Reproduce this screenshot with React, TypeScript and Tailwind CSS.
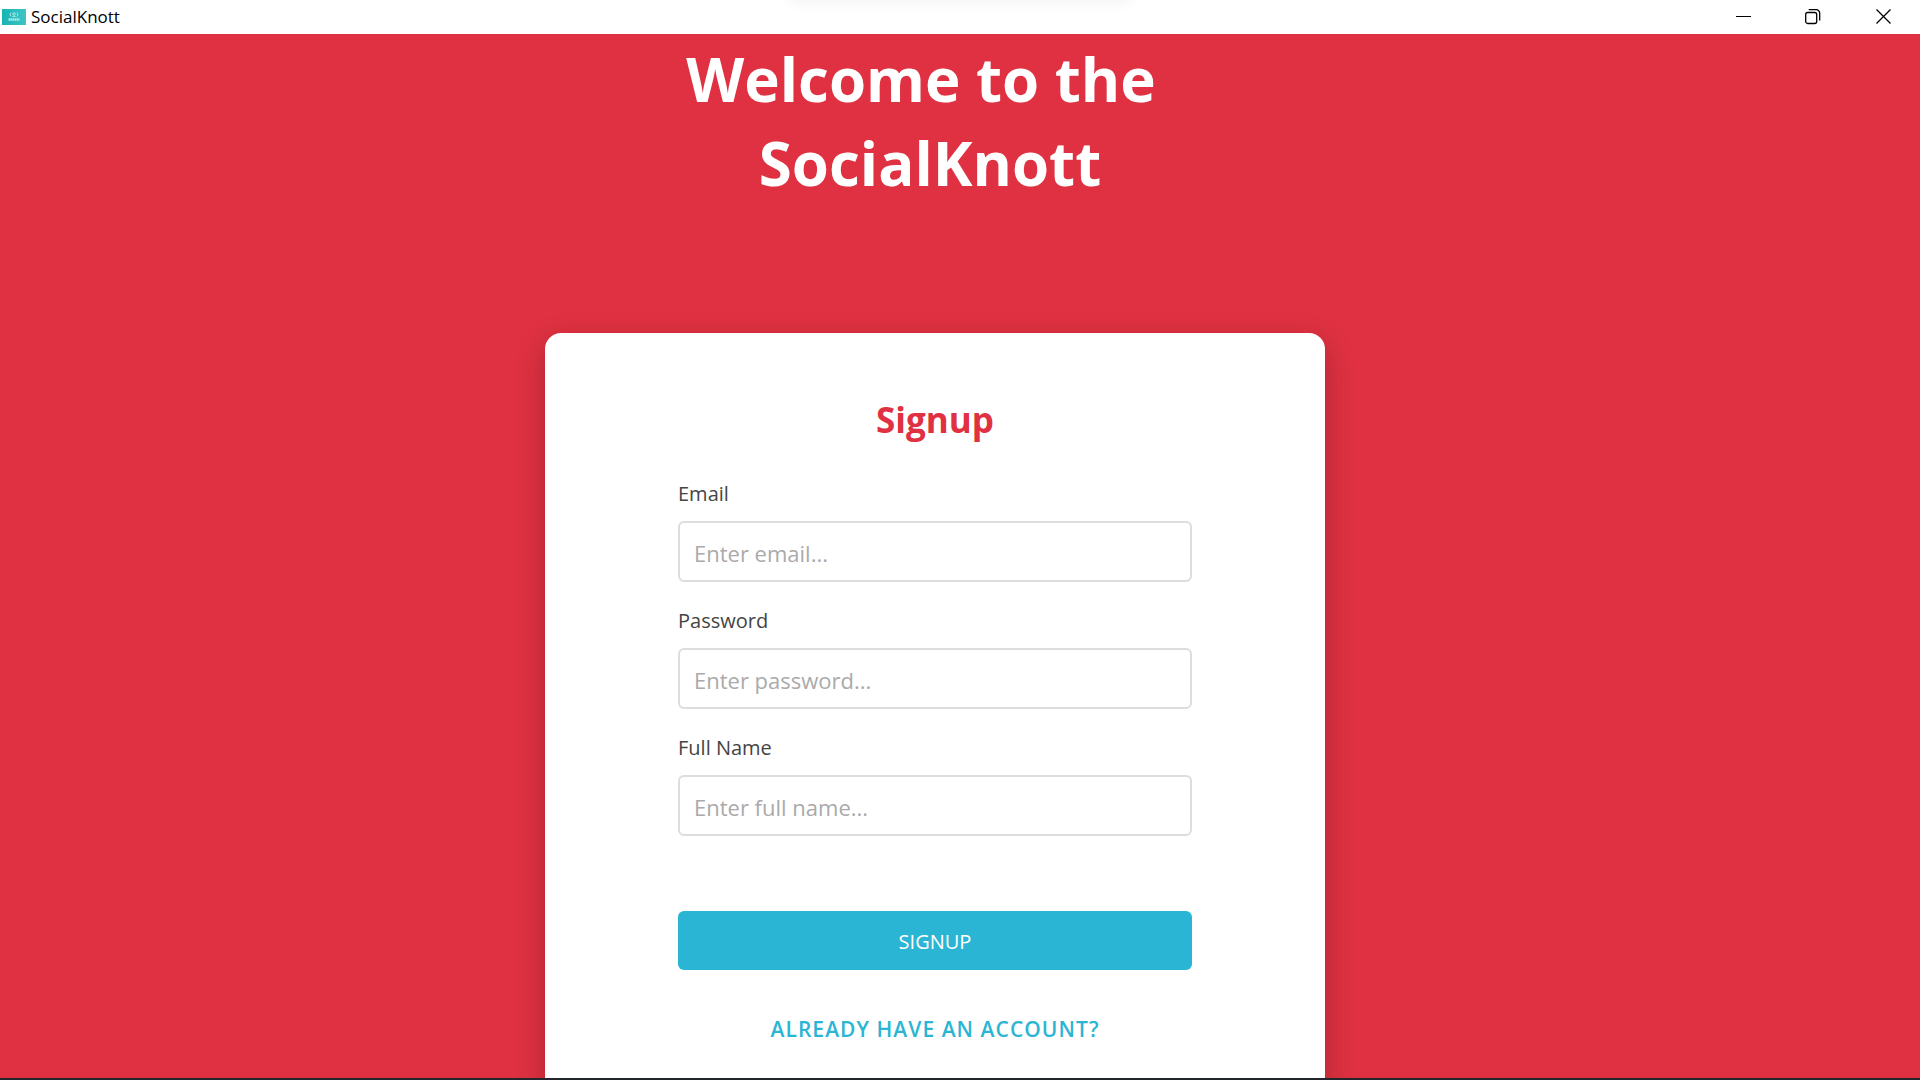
import React from "react";

function TitleBar() {
  return (
    <header className="relative flex h-[34px] shrink-0 items-center justify-between overflow-hidden bg-white text-black">
      <div className="absolute -top-4 left-1/2 h-3 w-[340px] -translate-x-1/2 rounded-full shadow-[0_4px_16px_rgba(0,0,0,0.08)]" />
      <div className="flex items-center gap-[5px] pl-[2px]">
        <svg width="24" height="16" viewBox="0 0 24 16" aria-hidden="true">
          <defs>
            <linearGradient id="badge" x1="0" y1="0" x2="1" y2="0">
              <stop offset="0" stopColor="#16b4b4" />
              <stop offset="1" stopColor="#3fc4c6" />
            </linearGradient>
          </defs>
          <rect width="24" height="16" fill="url(#badge)" />
          <g stroke="#c9f1f0" fill="none" strokeWidth="0.8">
            <path d="M9 3.500q-2 2 0 4M15 3.500q2 2 0 4" />
            <circle cx="12" cy="5" r="1.300" />
            <path d="M10.500 7.500h3" />
            <path d="M6.500 10.500h11" strokeWidth="2.400" strokeDasharray="1.600 0.400" opacity="0.85" />
          </g>
        </svg>
        <span className="text-[17px] leading-6">SocialKnott</span>
      </div>
      <div className="flex h-full">
        <button type="button" aria-label="Minimize" className="flex w-[69px] items-center justify-center">
          <svg width="16" height="16" viewBox="0 0 16 16" fill="none" stroke="currentColor">
            <path d="M0 7.500h15" />
          </svg>
        </button>
        <button type="button" aria-label="Restore" className="flex w-[69px] items-center justify-center">
          <svg width="16" height="16" viewBox="0 0 16 16" fill="none" stroke="currentColor" strokeWidth="1.300">
            <rect x="0.700" y="3.500" width="11" height="11" rx="2" />
            <path d="M3.700 0.700h7.500a3.500 3.500 0 0 1 3.500 3.500V11.500" />
          </svg>
        </button>
        <button type="button" aria-label="Close" className="flex w-[73px] items-center justify-center">
          <svg width="16" height="16" viewBox="0 0 16 16" fill="none" stroke="currentColor" strokeWidth="1.300">
            <path d="M0.500 0.500l14 14M14.500 0.500l-14 14" />
          </svg>
        </button>
      </div>
    </header>
  );
}

type FieldProps = { id: string; label: string; type: string; placeholder: string };

function Field({ id, label, type, placeholder }: FieldProps) {
  return (
    <div className="flex flex-col gap-[14px]">
      <label htmlFor={id} className="text-xl leading-[26px] text-[#444]">
        {label}
      </label>
      <input
        id={id}
        type={type}
        placeholder={placeholder}
        className="h-[61px] w-full rounded-md border-2 border-[#ddd] bg-white px-[14px] pt-[2px] text-[22px] text-[#444] outline-none placeholder:text-[#aaa]"
      />
    </div>
  );
}

const fields: FieldProps[] = [
  { id: "email", label: "Email", type: "email", placeholder: "Enter email..." },
  { id: "password", label: "Password", type: "password", placeholder: "Enter password..." },
  { id: "name", label: "Full Name", type: "text", placeholder: "Enter full name..." },
];

export default function App() {
  return (
    <div className="flex h-screen flex-col overflow-hidden border-b-2 border-[#22252a] bg-[#df3141] font-['Open_Sans','Noto_Sans',sans-serif]">
      <TitleBar />
      <main className="flex min-h-0 flex-1 flex-col items-center overflow-hidden pr-[50px]">
        <h1 className="mt-[3px] flex flex-col items-center text-6xl font-bold leading-[84px] text-white">
          <span className="pr-7">Welcome to the</span>
          <span className="pr-[10px]">SocialKnott</span>
        </h1>
        <form
          onSubmit={(e) => e.preventDefault()}
          className="mt-32 w-full max-w-[780px] shrink-0 rounded-2xl bg-white px-[133px] pb-24 pt-[63px] shadow-[0_10px_30px_rgba(0,0,0,0.22)]"
        >
          <h2 className="text-center text-[35px] font-bold leading-[48px] text-[#df3141]">Signup</h2>
          <div className="mt-[37px] flex flex-col gap-[26px]">
            {fields.map((f) => (
              <Field key={f.id} {...f} />
            ))}
          </div>
          <button type="submit" className="mt-[75px] h-[59px] w-full rounded-md bg-[#2bb5d4] pt-[2px] text-xl text-white">
            SIGNUP
          </button>
          <div className="mt-[43px] text-center">
            <a href="#login" className="text-[21px] font-semibold leading-8 tracking-wider text-[#2bb5d4]">
              ALREADY HAVE AN ACCOUNT?
            </a>
          </div>
        </form>
      </main>
    </div>
  );
}
